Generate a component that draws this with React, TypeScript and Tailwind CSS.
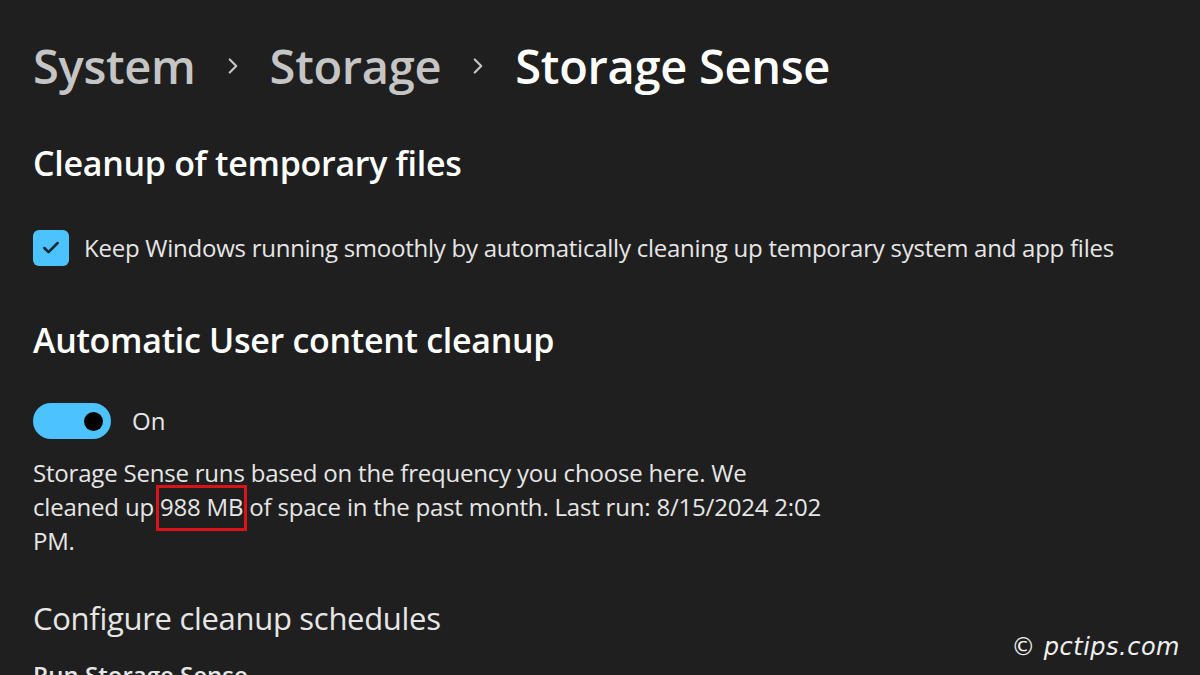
import { Check, ChevronRight } from "lucide-react";

const font = { fontFamily: '"Open Sans", "Noto Sans", sans-serif' };

export default function App() {
  return (
    <div
      className="relative h-[675px] w-[1200px] overflow-hidden bg-[#1f1f1f] pl-[33px] pt-[34px] text-white"
      style={font}
    >
      {/* Breadcrumb */}
      <div className="flex h-[64px] items-center text-[47px] font-semibold tracking-[-0.3px]">
        <span className="text-[#c5c5c5]">System</span>
        <ChevronRight className="mx-[24px] size-[26px] text-[#c5c5c5]" strokeWidth={2} />
        <span className="text-[#c5c5c5]">Storage</span>
        <ChevronRight className="mx-[24px] size-[26px] text-[#c5c5c5]" strokeWidth={2} />
        <span className="text-white">Storage Sense</span>
      </div>

      <h2 className="mt-[45px] text-[34px] font-semibold leading-[40px] tracking-[-0.3px]">
        Cleanup of temporary files
      </h2>

      <div className="mt-[47px] flex h-[36px] items-center gap-[15px]">
        <div className="flex size-[36px] items-center justify-center rounded-[6px] bg-[#4cc2ff]">
          <Check className="size-[20px] text-[#0f2633]" strokeWidth={3} />
        </div>
        <span className="text-[24px] tracking-[-0.25px] text-[#e6e6e6]">
          Keep Windows running smoothly by automatically cleaning up temporary system and app files
        </span>
      </div>

      <h2 className="mt-[54px] text-[34px] font-semibold leading-[40px] tracking-[-0.3px]">
        Automatic User content cleanup
      </h2>

      <div className="mt-[43px] flex items-center gap-[21px]">
        <div className="flex h-[36px] w-[78px] items-center justify-end rounded-full bg-[#4cc2ff] pr-[8px]">
          <div className="size-[19px] rounded-full bg-black" />
        </div>
        <span className="text-[24px] text-[#e6e6e6]">On</span>
      </div>

      <p className="mt-[17px] w-[900px] text-[24px] leading-[34px] tracking-[-0.2px] text-[#e6e6e6]">
        Storage Sense runs based on the frequency you choose here. We
        <br />
        cleaned up{" "}
        <span className="relative">
          988 MB
          <span className="absolute -left-[4px] -right-[4px] -top-[5px] -bottom-[8px] border-[3px] border-[#d8141a]" />
        </span>{" "}
        of space in the past month. Last run: 8/15/2024 2:02
        <br />
        PM.
      </p>

      <h3 className="mt-[40px] text-[31px] leading-[40px] tracking-[-0.3px] text-[#e6e6e6]">
        Configure cleanup schedules
      </h3>

      <div className="mt-[21px] text-[24px] font-semibold leading-[32px] text-[#e6e6e6]">Run Storage Sense</div>

      {/* Watermark */}
      <div
        className="absolute bottom-[10px] right-[20px] text-[24px] italic tracking-[0.5px] text-[#f0f0f0]"
        style={{ fontFamily: '"DejaVu Sans", sans-serif' }}
      >
        © pctips.com
      </div>
    </div>
  );
}
